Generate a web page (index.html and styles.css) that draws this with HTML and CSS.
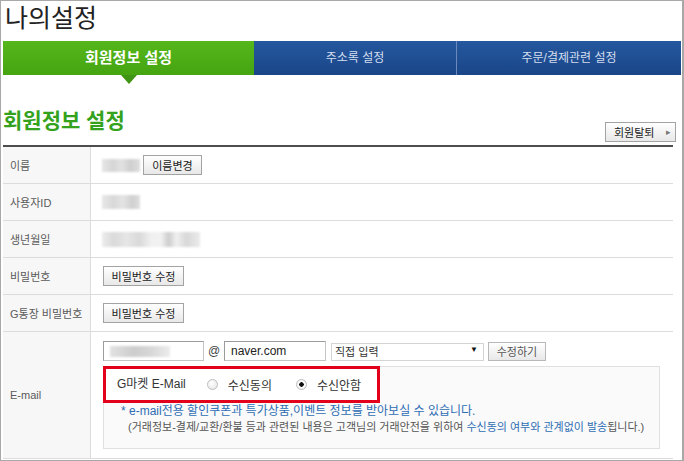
FILE: index.html
```html
<!DOCTYPE html>
<html lang="ko">

<head>
    <meta charset="UTF-8">
    <meta name="viewport" content="width=device-width, initial-scale=1.0">
    <link rel="stylesheet" href="styles.css">
    <title>나의설정</title>
</head>

<body>
    <div class="page">
        <h1 class="page-title">나의설정</h1>

        <ul class="tabs">
            <li class="tab active">회원정보 설정</li>
            <li class="tab">주소록 설정</li>
            <li class="tab">주문/결제관련 설정</li>
        </ul>

        <div class="section-head">
            <h2>회원정보 설정</h2>
            <button class="btn btn-leave">회원탈퇴 <span class="arr">&#9656;</span></button>
        </div>

        <div class="info">
            <div class="row">
                <div class="label">이름</div>
                <div class="value">
                    <span class="blur blur-name"></span>
                    <button class="btn btn-name">이름변경</button>
                </div>
            </div>
            <div class="row">
                <div class="label">사용자ID</div>
                <div class="value">
                    <span class="blur blur-id"></span>
                </div>
            </div>
            <div class="row">
                <div class="label">생년월일</div>
                <div class="value">
                    <span class="blur blur-birth"></span>
                </div>
            </div>
            <div class="row">
                <div class="label">비밀번호</div>
                <div class="value">
                    <button class="btn btn-pw">비밀번호 수정</button>
                </div>
            </div>
            <div class="row">
                <div class="label">G통장 비밀번호</div>
                <div class="value">
                    <button class="btn btn-pw">비밀번호 수정</button>
                </div>
            </div>
            <div class="row row-email">
                <div class="label">E-mail</div>
                <div class="value">
                    <div class="email-line">
                        <div class="field field-id"><span class="blur blur-mail"></span></div>
                        <span class="at">@</span>
                        <div class="field field-domain">naver.com</div>
                        <div class="select-box">
                            <select id="domain-select">
                                <option>직접 입력</option>
                                <option>naver.com</option>
                                <option>hanmail.net</option>
                            </select>
                        </div>
                        <button class="btn btn-edit">수정하기</button>
                    </div>

                    <div class="mail-box">
                        <div class="agree">
                            <span class="agree-title">G마켓 E-Mail</span>
                            <label class="radio"><input type="radio" name="mail"> 수신동의</label>
                            <label class="radio"><input type="radio" name="mail" checked> 수신안함</label>
                        </div>
                        <p class="note">* e-mail전용 할인쿠폰과 특가상품,이벤트 정보를 받아보실 수 있습니다.</p>
                        <p class="note note-sub">(거래정보-결제/교환/환불 등과 관련된 내용은 고객님의 거래안전을 위하여 <span class="blue">수신동의 여부와 관계없이 발송</span>됩니다.)</p>
                    </div>
                </div>
            </div>
        </div>
    </div>
</body>

</html>
```

FILE: styles.css
```css
* {
    margin: 0;
    padding: 0;
    box-sizing: border-box;
    font-family: 'Liberation Sans', 'Noto Sans CJK KR', sans-serif;
}

body {
    background: #fff;
}

.page {
    width: 684px;
    height: 461px;
    border: 1px solid #a8a8a8;
    border-right-width: 2px;
    padding: 0 1px 0 2px;
    overflow: hidden;
}

.page-title {
    height: 40px;
    padding-left: 2px;
    font-size: 25px;
    line-height: 34px;
    font-weight: normal;
    color: #222;
}

/* tabs */
.tabs {
    display: flex;
    list-style: none;
    height: 34px;
}

.tab {
    position: relative;
    text-align: center;
    line-height: 34px;
    font-size: 12px;
    color: #d3ddee;
    background: linear-gradient(#25589f, #1a4588);
}

.tab:nth-child(1) {
    width: 251px;
}

.tab:nth-child(2) {
    width: 203px;
    border-right: 1px solid #6b89bb;
}

.tab:nth-child(3) {
    flex: 1;
}

.tab.active {
    font-size: 15px;
    font-weight: bold;
    color: #fff;
    background: linear-gradient(#55b71b, #45a411);
}

.tab.active::after {
    content: '';
    position: absolute;
    left: 118px;
    top: 100%;
    border-left: 8px solid transparent;
    border-right: 8px solid transparent;
    border-top: 9px solid #3f9513;
}

/* heading */
.section-head {
    width: 673px;
    height: 70px;
    display: flex;
    justify-content: space-between;
    align-items: flex-end;
    padding-bottom: 3px;
}

.section-head h2 {
    font-size: 21px;
    line-height: 24px;
    margin-bottom: 9px;
    color: #34a21d;
}

.btn {
    height: 20px;
    padding: 0 7px;
    font-size: 11px;
    color: #222;
    border: 1px solid #a3a3a3;
    background: linear-gradient(#fff, #e8e8e8);
    cursor: pointer;
}

.btn-leave {
    width: 71px;
    padding: 0 4px 0 8px;
    display: flex;
    align-items: center;
    justify-content: space-between;
}

.btn-leave .arr {
    color: #777;
    font-size: 9px;
}

/* info rows */
.info {
    width: 670px;
    border-top: 2px solid #4d4d4d;
}

.row {
    display: flex;
    height: 37px;
    border-bottom: 1px solid #dcdcdc;
}

.label {
    width: 88px;
    padding-left: 7px;
    display: flex;
    align-items: center;
    font-size: 11px;
    color: #5a5a5a;
    background: #f7f7f7;
    border-right: 1px solid #dcdcdc;
}

.value {
    flex: 1;
    padding-left: 11px;
    display: flex;
    align-items: center;
    gap: 3px;
}

.blur {
    display: inline-block;
    height: 13px;
    filter: blur(1px);
}

.blur-name {
    width: 38px;
    background: linear-gradient(90deg, #e6e6e6, #d5d5d5 30%, #e2e2e2 50%, #cfcfcf 75%, #dedede);
}

.blur-id {
    width: 38px;
    height: 14px;
    background: linear-gradient(90deg, #e8e8e8, #d8d8d8 30%, #e4e4e4 55%, #d0d0d0 80%, #e0e0e0);
}

.blur-birth {
    width: 98px;
    height: 15px;
    background: linear-gradient(90deg, #ececec, #dadada 12%, #e6e6e6 25%, #d9d9d9 38%, #f0f0f0 50%, #f2f2f2 60%, #cdcdcd 68%, #f0f0f0 76%, #d8d8d8 86%, #ebebeb);
}

.btn-name {
    width: 59px;
}

.btn-pw {
    width: 81px;
    margin-left: 1px;
}

/* e-mail */
.row-email {
    height: 127px;
}

.row-email .value {
    display: block;
    padding-top: 9px;
    padding-left: 12px;
}

.email-line {
    display: flex;
    align-items: center;
    height: 20px;
}

.field {
    height: 20px;
    border: 1px solid #c4c4c4;
    border-top-color: #9c9c9c;
    border-left-color: #9c9c9c;
    font-size: 12px;
    line-height: 18px;
    padding-left: 6px;
    color: #222;
    background: #fff;
}

.field-id {
    width: 101px;
    display: flex;
    align-items: center;
}

.blur-mail {
    width: 60px;
    height: 11px;
    background: linear-gradient(90deg, #e2e2e2, #cdcdcd 40%, #d8d8d8 70%, #ececec);
}

.at {
    width: 20px;
    text-align: center;
    font-size: 12px;
    color: #444;
}

.field-domain {
    width: 102px;
}

.select-box {
    position: relative;
    margin-left: 5px;
    width: 153px;
    height: 18px;
}

.select-box select {
    appearance: none;
    width: 100%;
    height: 18px;
    padding-left: 3px;
    font-size: 11px;
    color: #333;
    border: 1px solid #d4d4d4;
    background: #fff;
    outline: none;
}

.select-box::after {
    content: '\25BC';
    position: absolute;
    right: 6px;
    top: 3px;
    font-size: 8px;
    color: #111;
    pointer-events: none;
}

.btn-edit {
    margin-left: 4px;
    width: 58px;
    height: 19px;
    color: #555;
    border-color: #b8b8b8;
}

.mail-box {
    margin-top: 5px;
    width: 557px;
    height: 83px;
    border: 1px solid #e0e0e0;
    background: #fafafa;
}

.agree {
    margin: -1px 0 0 -1px;
    width: 277px;
    height: 37px;
    border: 3px solid #e2001a;
    display: flex;
    align-items: center;
    padding-left: 11px;
    font-size: 12px;
    color: #333;
    background: #fff;
    white-space: nowrap;
}

.agree-title {
    flex-shrink: 0;
    margin-top: -4px;
    margin-right: 21px;
}

.radio {
    flex-shrink: 0;
    display: flex;
    align-items: center;
    margin-right: 24px;
}

.radio input {
    appearance: none;
    width: 11px;
    height: 11px;
    margin-right: 10px;
    border: 1px solid #bdbdbd;
    border-radius: 50%;
    background: radial-gradient(circle at 40% 35%, #fff, #e3e3e3);
}

.radio input:checked {
    background: radial-gradient(#111 0 2px, #fff 2.5px, #e6e6e6);
}

.note {
    padding-left: 17px;
    font-size: 12px;
    line-height: 16px;
    color: #2e6db4;
}

.note-sub {
    padding-left: 24px;
    font-size: 11px;
    color: #555;
}

.blue {
    color: #2e6db4;
}
```
